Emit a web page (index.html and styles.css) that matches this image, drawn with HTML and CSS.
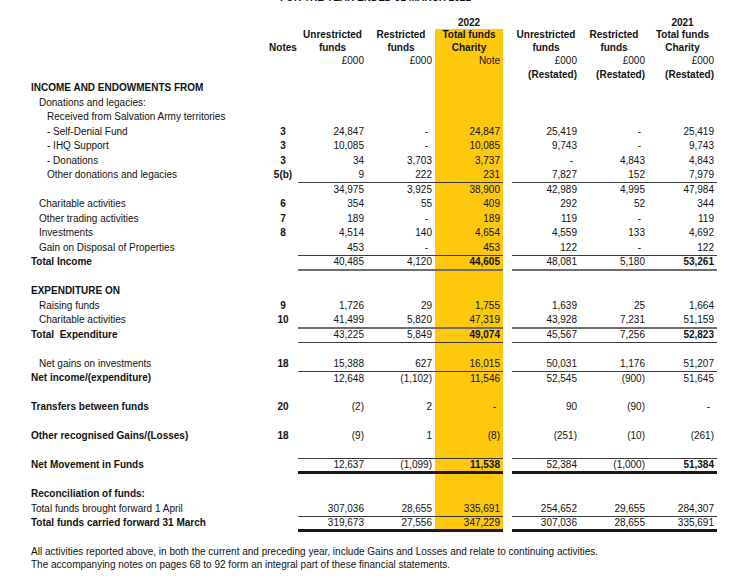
FILE: index.html
```html
<!DOCTYPE html>
<html lang="en">
<head>
<meta charset="utf-8">
<title>Statement of Financial Activities</title>
<link rel="stylesheet" href="styles.css">
</head>
<body>
<div class="page">
  <div class="title">FOR THE YEAR ENDED 31 MARCH 2022</div>
  <table class="sofa">
    <colgroup>
      <col class="c-lbl"><col class="c-nt"><col class="c-u"><col class="c-r"><col class="c-t"><col class="c-gap"><col class="c-u2"><col class="c-r2"><col class="c-t2">
    </colgroup>
    <thead>
      <tr class="hA"><td></td><td></td><td></td><td></td><td class="hc">2022</td><td></td><td></td><td></td><td class="hc">2021</td></tr>
      <tr class="hB"><td></td><td></td><td class="hc">Unrestricted</td><td class="hc">Restricted</td><td class="hc y">Total funds</td><td></td><td class="hc">Unrestricted</td><td class="hc">Restricted</td><td class="hc">Total funds</td></tr>
      <tr class="hC"><td></td><td class="hc">Notes</td><td class="hc">funds</td><td class="hc">funds</td><td class="hc y">Charity</td><td></td><td class="hc">funds</td><td class="hc">funds</td><td class="hc">Charity</td></tr>
      <tr class="hD"><td></td><td></td><td class="n">£000</td><td class="n">£000</td><td class="n y">Note</td><td></td><td class="n">£000</td><td class="n">£000</td><td class="n">£000</td></tr>
      <tr class="hE"><td></td><td></td><td></td><td></td><td class="y"></td><td></td><td class="n b">(Restated)</td><td class="n b">(Restated)</td><td class="n b">(Restated)</td></tr>
    </thead>
    <tbody>
      <tr><td class="lbl b">INCOME AND ENDOWMENTS FROM</td><td></td><td></td><td></td><td class="y"></td><td></td><td></td><td></td><td></td></tr>
      <tr><td class="lbl l1">Donations and legacies:</td><td></td><td></td><td></td><td class="y"></td><td></td><td></td><td></td><td></td></tr>
      <tr><td class="lbl l2">Received from Salvation Army territories</td><td></td><td></td><td></td><td class="y"></td><td></td><td></td><td></td><td></td></tr>
      <tr><td class="lbl l2">- Self-Denial Fund</td><td class="nt">3</td><td class="n">24,847</td><td class="n d">-</td><td class="n y">24,847</td><td class="gap"></td><td class="n">25,419</td><td class="n d">-</td><td class="n">25,419</td></tr>
      <tr><td class="lbl l2">- IHQ Support</td><td class="nt">3</td><td class="n">10,085</td><td class="n d">-</td><td class="n y">10,085</td><td class="gap"></td><td class="n">9,743</td><td class="n d">-</td><td class="n">9,743</td></tr>
      <tr><td class="lbl l2">- Donations</td><td class="nt">3</td><td class="n">34</td><td class="n">3,703</td><td class="n y">3,737</td><td class="gap"></td><td class="n d">-</td><td class="n">4,843</td><td class="n">4,843</td></tr>
      <tr class="ul"><td class="lbl l2">Other donations and legacies</td><td class="nt">5(b)</td><td class="n">9</td><td class="n">222</td><td class="n y">231</td><td class="gap"></td><td class="n">7,827</td><td class="n">152</td><td class="n">7,979</td></tr>
      <tr><td class="lbl"></td><td class="nt"></td><td class="n">34,975</td><td class="n">3,925</td><td class="n y">38,900</td><td class="gap"></td><td class="n">42,989</td><td class="n">4,995</td><td class="n">47,984</td></tr>
      <tr><td class="lbl l1">Charitable activities</td><td class="nt">6</td><td class="n">354</td><td class="n">55</td><td class="n y">409</td><td class="gap"></td><td class="n">292</td><td class="n">52</td><td class="n">344</td></tr>
      <tr><td class="lbl l1">Other trading activities</td><td class="nt">7</td><td class="n">189</td><td class="n d">-</td><td class="n y">189</td><td class="gap"></td><td class="n">119</td><td class="n d">-</td><td class="n">119</td></tr>
      <tr><td class="lbl l1">Investments</td><td class="nt">8</td><td class="n">4,514</td><td class="n">140</td><td class="n y">4,654</td><td class="gap"></td><td class="n">4,559</td><td class="n">133</td><td class="n">4,692</td></tr>
      <tr class="ul"><td class="lbl l1">Gain on Disposal of Properties</td><td class="nt"></td><td class="n">453</td><td class="n d">-</td><td class="n y">453</td><td class="gap"></td><td class="n">122</td><td class="n d">-</td><td class="n">122</td></tr>
      <tr class="ul2"><td class="lbl b">Total Income</td><td class="nt"></td><td class="n">40,485</td><td class="n">4,120</td><td class="n y b">44,605</td><td class="gap"></td><td class="n">48,081</td><td class="n">5,180</td><td class="n b">53,261</td></tr>
      <tr><td class="lbl"></td><td></td><td></td><td></td><td class="y"></td><td></td><td></td><td></td><td></td></tr>
      <tr><td class="lbl b">EXPENDITURE ON</td><td></td><td></td><td></td><td class="y"></td><td></td><td></td><td></td><td></td></tr>
      <tr><td class="lbl l1">Raising funds</td><td class="nt">9</td><td class="n">1,726</td><td class="n">29</td><td class="n y">1,755</td><td class="gap"></td><td class="n">1,639</td><td class="n">25</td><td class="n">1,664</td></tr>
      <tr class="ul2"><td class="lbl l1">Charitable activities</td><td class="nt">10</td><td class="n">41,499</td><td class="n">5,820</td><td class="n y">47,319</td><td class="gap"></td><td class="n">43,928</td><td class="n">7,231</td><td class="n">51,159</td></tr>
      <tr class="ul"><td class="lbl b">Total &nbsp;Expenditure</td><td class="nt"></td><td class="n">43,225</td><td class="n">5,849</td><td class="n y b">49,074</td><td class="gap"></td><td class="n">45,567</td><td class="n">7,256</td><td class="n b">52,823</td></tr>
      <tr><td class="lbl"></td><td></td><td></td><td></td><td class="y"></td><td></td><td></td><td></td><td></td></tr>
      <tr class="ul"><td class="lbl l1">Net gains on investments</td><td class="nt">18</td><td class="n">15,388</td><td class="n">627</td><td class="n y">16,015</td><td class="gap"></td><td class="n">50,031</td><td class="n">1,176</td><td class="n">51,207</td></tr>
      <tr><td class="lbl b">Net income/(expenditure)</td><td class="nt"></td><td class="n">12,648</td><td class="n">(1,102)</td><td class="n y">11,546</td><td class="gap"></td><td class="n">52,545</td><td class="n">(900)</td><td class="n">51,645</td></tr>
      <tr><td class="lbl"></td><td></td><td></td><td></td><td class="y"></td><td></td><td></td><td></td><td></td></tr>
      <tr><td class="lbl b">Transfers between funds</td><td class="nt">20</td><td class="n">(2)</td><td class="n">2</td><td class="n y d">-</td><td class="gap"></td><td class="n">90</td><td class="n">(90)</td><td class="n d">-</td></tr>
      <tr><td class="lbl"></td><td></td><td></td><td></td><td class="y"></td><td></td><td></td><td></td><td></td></tr>
      <tr><td class="lbl b">Other recognised Gains/(Losses)</td><td class="nt">18</td><td class="n">(9)</td><td class="n">1</td><td class="n y">(8)</td><td class="gap"></td><td class="n">(251)</td><td class="n">(10)</td><td class="n">(261)</td></tr>
      <tr><td class="lbl"></td><td></td><td></td><td></td><td class="y"></td><td></td><td></td><td></td><td></td></tr>
      <tr class="ol ul3"><td class="lbl b">Net Movement in Funds</td><td class="nt"></td><td class="n">12,637</td><td class="n">(1,099)</td><td class="n y b">11,538</td><td class="gap"></td><td class="n">52,384</td><td class="n">(1,000)</td><td class="n b">51,384</td></tr>
      <tr><td class="lbl"></td><td></td><td></td><td></td><td class="y"></td><td></td><td></td><td></td><td></td></tr>
      <tr><td class="lbl b">Reconciliation of funds:</td><td></td><td></td><td></td><td class="y"></td><td></td><td></td><td></td><td></td></tr>
      <tr class="ul"><td class="lbl">Total funds brought forward 1 April</td><td class="nt"></td><td class="n">307,036</td><td class="n">28,655</td><td class="n y">335,691</td><td class="gap"></td><td class="n">254,652</td><td class="n">29,655</td><td class="n">284,307</td></tr>
      <tr class="ul3"><td class="lbl b">Total funds carried forward 31 March</td><td class="nt"></td><td class="n">319,673</td><td class="n">27,556</td><td class="n y">347,229</td><td class="gap"></td><td class="n">307,036</td><td class="n">28,655</td><td class="n">335,691</td></tr>
    </tbody>
  </table>
  <div class="foot">
    <p>All activities reported above, in both the current and preceding year, include Gains and Losses and relate to continuing activities.</p>
    <p>The accompanying notes on pages 68 to 92 form an integral part of these financial statements.</p>
  </div>
</div>
</body>
</html>
```

FILE: styles.css
```css
html, body {
  margin: 0;
  padding: 0;
  background: #ffffff;
}

body {
  font-family: "Liberation Sans", Arial, sans-serif;
  font-size: 10px;
  color: #111111;
  overflow: hidden;
}

.page {
  width: 733px;
  height: 579px;
  padding-left: 31px;
  box-sizing: border-box;
}

.title {
  margin-top: -8px;
  margin-bottom: 13px;
  padding-left: 249px;
  font-weight: bold;
  line-height: 12px;
  height: 12px;
  white-space: nowrap;
}

.sofa {
  border-collapse: collapse;
  table-layout: fixed;
  width: 686px;
}

.c-lbl { width: 237px; }
.c-nt { width: 30px; }
.c-u { width: 69px; }
.c-r { width: 68px; }
.c-t { width: 68px; }
.c-gap { width: 9px; }
.c-u2 { width: 68px; }
.c-r2 { width: 68px; }
.c-t2 { width: 69px; }

.sofa td {
  padding: 0;
  line-height: 12px;
  white-space: nowrap;
  vertical-align: middle;
}

.hA { height: 12px; }
.hB { height: 12px; }
.hC { height: 13px; }
.hD { height: 14px; }
.hE { height: 13px; }

.hc {
  text-align: center;
  font-weight: bold;
}

.sofa tbody tr { height: 14.5px; }

.lbl { text-align: left; }
.l1 { padding-left: 8px !important; }
.l2 { padding-left: 16px !important; }

.nt {
  text-align: center;
  font-weight: bold;
}

.n {
  text-align: right;
  padding-right: 3px !important;
}

.n.d { padding-right: 7px !important; }

.b { font-weight: bold; }

.y { background: #fec80d; }

.ul td.n { border-bottom: 1px solid #3a3a3a; }
.ul2 td.n { border-bottom: 2px solid #6e6e6e; }
.ul3 td.n { border-bottom: 3px solid #1a1a1a; }
.ol td.n { border-top: 1px solid #3a3a3a; }

.foot {
  margin-top: 14px;
}

.foot p {
  margin: 0;
  line-height: 12.5px;
}
```
